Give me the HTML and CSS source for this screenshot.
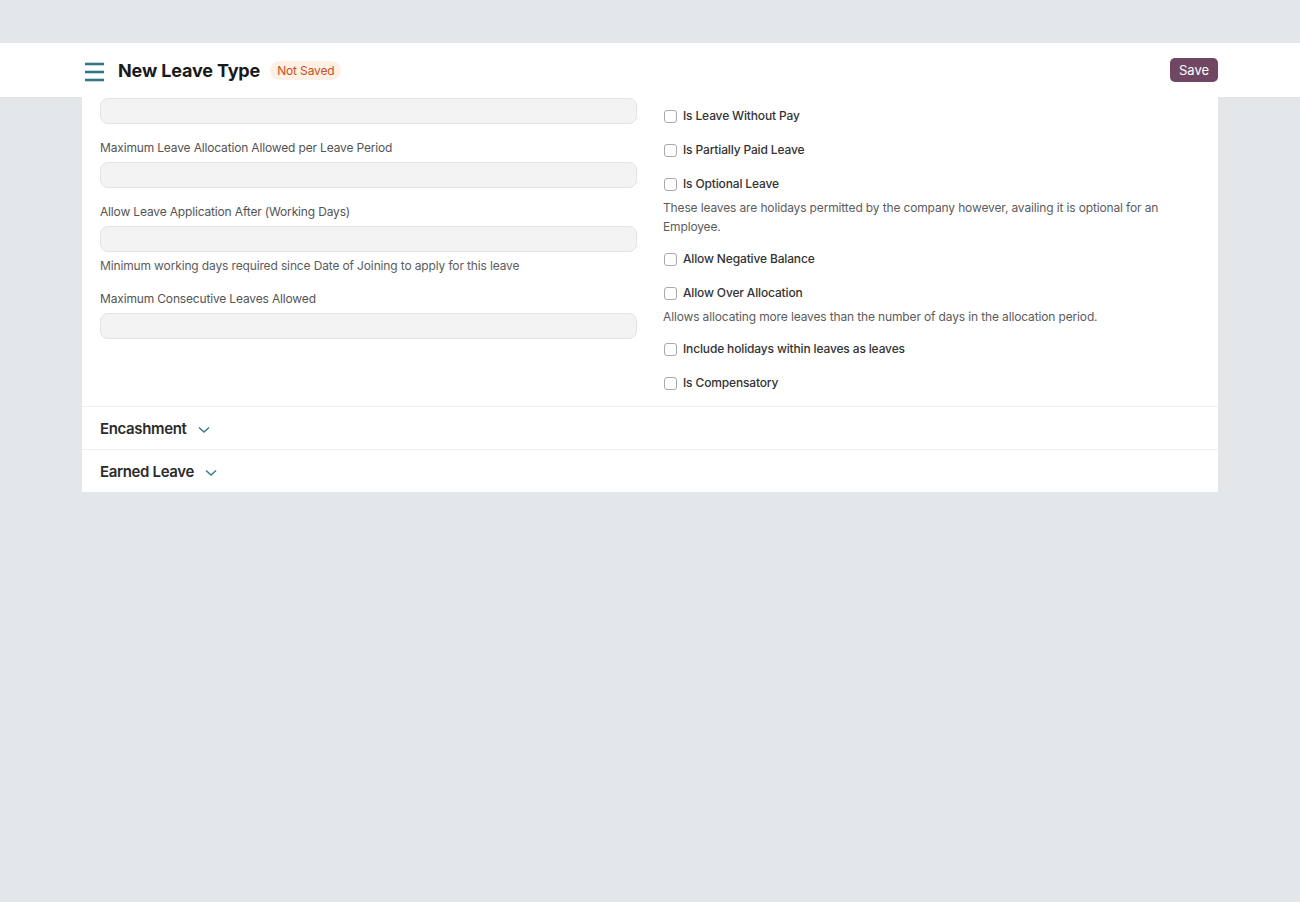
FILE: index.html
```html
<!DOCTYPE html>
<html lang="en">
<head>
    <meta charset="UTF-8">
    <meta name="viewport" content="width=device-width, initial-scale=1.0">
    <title>New Leave Type</title>
    <link rel="stylesheet" href="styles.css">
</head>
<body>

    <div class="navbar-space"></div>

    <!-- Sticky page head -->
    <div class="page-head">
        <div class="page-head-inner">
            <div class="title-area">
                <svg class="sidebar-toggle" width="22" height="22" viewBox="0 0 22 22">
                    <line x1="1" y1="4" x2="20" y2="4" />
                    <line x1="1" y1="12" x2="20" y2="12" />
                    <line x1="1" y1="20" x2="20" y2="20" />
                </svg>
                <h1 class="page-title">New Leave Type</h1>
                <span class="indicator-pill">Not Saved</span>
            </div>
            <button class="btn-save">Save</button>
        </div>
    </div>

    <div class="form-card">
        <!-- Main section -->
        <div class="form-section">
            <div class="form-column">
                <div class="field">
                    <input type="text" class="control">
                </div>
                <div class="field">
                    <label>Maximum Leave Allocation Allowed per Leave Period</label>
                    <input type="text" class="control">
                </div>
                <div class="field">
                    <label>Allow Leave Application After (Working Days)</label>
                    <input type="text" class="control">
                    <p class="help">Minimum working days required since Date of Joining to apply for this leave</p>
                </div>
                <div class="field">
                    <label>Maximum Consecutive Leaves Allowed</label>
                    <input type="text" class="control">
                </div>
            </div>

            <div class="form-column checks">
                <div class="check-field">
                    <label><span class="box"></span>Is Leave Without Pay</label>
                </div>
                <div class="check-field">
                    <label><span class="box"></span>Is Partially Paid Leave</label>
                </div>
                <div class="check-field has-help">
                    <label><span class="box"></span>Is Optional Leave</label>
                    <p class="help">These leaves are holidays permitted by the company however, availing it is optional for an Employee.</p>
                </div>
                <div class="check-field">
                    <label><span class="box"></span>Allow Negative Balance</label>
                </div>
                <div class="check-field has-help">
                    <label><span class="box"></span>Allow Over Allocation</label>
                    <p class="help">Allows allocating more leaves than the number of days in the allocation period.</p>
                </div>
                <div class="check-field">
                    <label><span class="box"></span>Include holidays within leaves as leaves</label>
                </div>
                <div class="check-field">
                    <label><span class="box"></span>Is Compensatory</label>
                </div>
            </div>
        </div>

        <!-- Collapsed sections -->
        <div class="collapsed-section">
            <span class="section-title">Encashment</span>
            <svg class="chevron" width="12" height="8" viewBox="0 0 12 8"><path d="M1 1.5 L6 6 L11 1.5" /></svg>
        </div>
        <div class="collapsed-section">
            <span class="section-title">Earned Leave</span>
            <svg class="chevron" width="12" height="8" viewBox="0 0 12 8"><path d="M1 1.5 L6 6 L11 1.5" /></svg>
        </div>
    </div>

</body>
</html>
```

FILE: styles.css
```css
body {
    font-family: Inter, "Noto Sans", sans-serif;
    background-color: #e3e7ea;
    color: #1f272e;
    margin: 0;
    min-height: 902px;
}
.navbar-space {
    height: 43px;
}
.page-head {
    background-color: #fff;
    height: 54px;
}
.page-head-inner {
    width: 1136px;
    margin: 0 auto;
    height: 100%;
    display: flex;
    align-items: center;
    justify-content: space-between;
}
.title-area {
    display: flex;
    align-items: center;
    padding-left: 2px;
}
.sidebar-toggle {
    stroke: #35787f;
    stroke-width: 2.6;
    margin-right: 12px;
    margin-top: 1px;
}
.page-title {
    font-size: 18px;
    font-weight: 700;
    color: #1a1a1a;
    margin: 0 10px 0 0;
    letter-spacing: -0.15px;
}
.indicator-pill {
    background-color: #fff0e5;
    color: #c8501c;
    font-size: 12px;
    line-height: 19px;
    padding: 0 7px;
    border-radius: 10px;
    letter-spacing: -0.15px;
}
.btn-save {
    background-color: #6f4763;
    color: #fff;
    border: none;
    border-radius: 5px;
    font-family: inherit;
    font-size: 13px;
    height: 24px;
    width: 48px;
    padding: 0;
}
.form-card {
    width: 1136px;
    margin: 0 auto;
    background-color: #fff;
}
.form-section {
    display: grid;
    grid-template-columns: 1fr 1fr;
    column-gap: 26px;
    padding: 1px 18px 14px;
    border-bottom: 1px solid #eeeeee;
}
.field {
    margin-bottom: 15px;
}
.field label {
    display: block;
    font-size: 12px;
    line-height: 18px;
    color: #545454;
    margin-bottom: 5px;
    letter-spacing: -0.16px;
}
.control {
    display: block;
    width: 100%;
    height: 26px;
    box-sizing: border-box;
    background-color: #f3f3f3;
    border: 1px solid #e3e3e3;
    border-radius: 8px;
}
.help {
    font-size: 12px;
    line-height: 19px;
    color: #5c5c5c;
    margin: 4px 0 0;
    letter-spacing: -0.14px;
}
.checks {
    padding-top: 9px;
}
.check-field {
    margin-bottom: 16px;
}
.check-field.has-help {
    margin-bottom: 14px;
}
.check-field:last-child {
    margin-bottom: 0;
}
.check-field label {
    display: flex;
    align-items: center;
    font-size: 12px;
    line-height: 18px;
    font-weight: 500;
    color: #333;
    letter-spacing: -0.15px;
}
.check-field .help {
    margin-top: 5px;
}
.box {
    width: 11px;
    height: 11px;
    border: 1px solid #a9a9a9;
    border-radius: 3px;
    margin: 0 6px 0 1px;
    background-color: #fff;
}
.collapsed-section {
    display: flex;
    align-items: center;
    height: 42px;
    padding: 0 18px;
    border-bottom: 1px solid #eeeeee;
}
.collapsed-section:last-child {
    border-bottom: none;
}
.section-title {
    font-size: 15px;
    font-weight: 600;
    color: #2b2b2b;
    letter-spacing: -0.35px;
}
.chevron {
    fill: none;
    stroke: #3a7c84;
    stroke-width: 1.5;
    margin-left: 11px;
    margin-top: 3px;
}
```
